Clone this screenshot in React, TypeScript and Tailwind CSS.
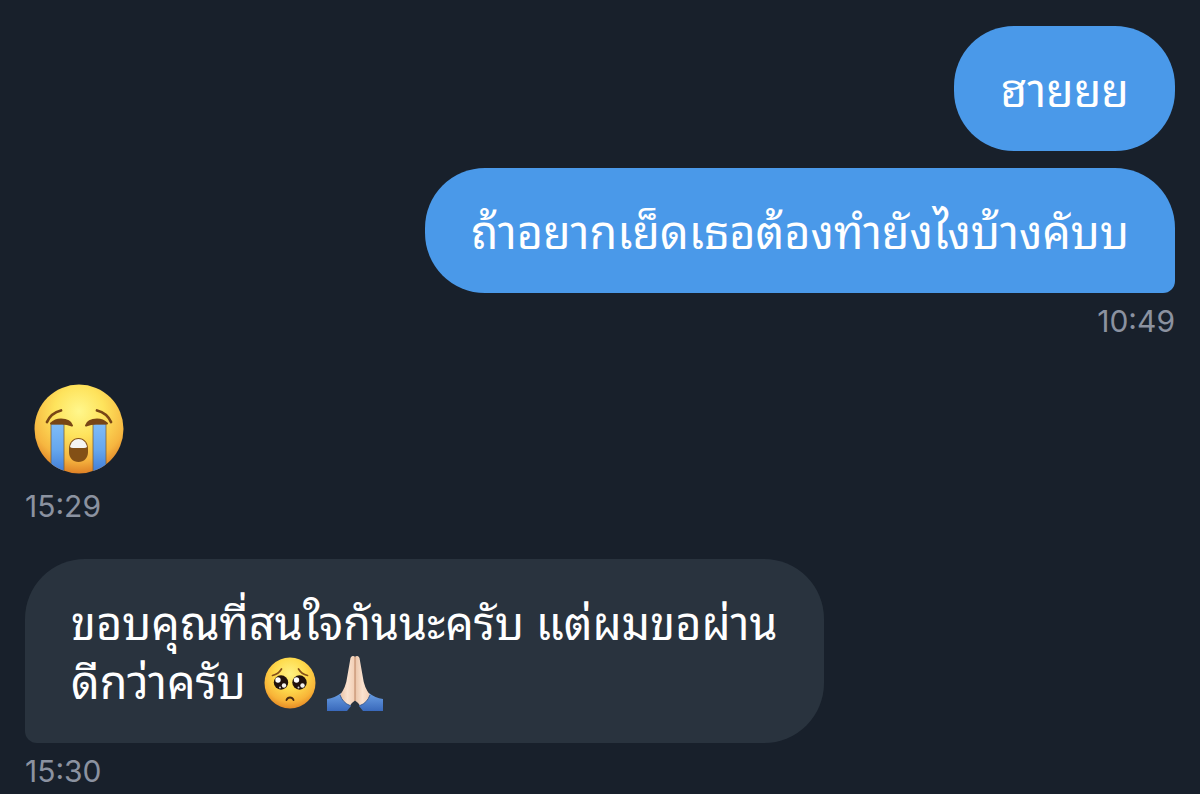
import type { ReactNode } from "react"
import clsx from "clsx"

function CryingFace({ className }: { className?: string }) {
  return (
    <svg viewBox="0 0 90 90" className={className} role="img" aria-label="Loudly crying face">
      <defs>
        <radialGradient id="cry-skin" cx="0.5" cy="0.3" r="0.7">
          <stop offset="0" stopColor="#fff78c" />
          <stop offset="0.4" stopColor="#fee35c" />
          <stop offset="0.78" stopColor="#f6b640" />
          <stop offset="1" stopColor="#df8126" />
        </radialGradient>
        <linearGradient id="cry-tear" x1="0" y1="0" x2="0" y2="1">
          <stop offset="0" stopColor="#7fbcf8" />
          <stop offset="0.5" stopColor="#66a7ee" />
          <stop offset="1" stopColor="#3c77d2" />
        </linearGradient>
        <clipPath id="cry-clip">
          <circle cx="45" cy="45" r="44.5" />
        </clipPath>
      </defs>
      <circle cx="45" cy="45" r="44.5" fill="url(#cry-skin)" />
      <g clipPath="url(#cry-clip)">
        <path d="M17 40h13v51H17z" fill="url(#cry-tear)" stroke="#78623f" strokeWidth="0.8" />
        <path d="M59 40h13v51H59z" fill="url(#cry-tear)" stroke="#78623f" strokeWidth="0.8" />
      </g>
      <path d="M13 38q4-9 14-11.5" fill="none" stroke="#784616" strokeWidth="2.8" strokeLinecap="round" />
      <path d="M77 38q-4-9-14-11.5" fill="none" stroke="#784616" strokeWidth="2.8" strokeLinecap="round" />
      <path d="M17 39.5q4-4 10-4 9 0 11 6-5-2-10-2-6 0-11 0z" fill="#784616" stroke="#784616" strokeWidth="2" strokeLinejoin="round" />
      <path d="M73 39.5q-4-4-10-4-9 0-11 6 5-2 10-2 6 0 11 0z" fill="#784616" stroke="#784616" strokeWidth="2" strokeLinejoin="round" />
      <path d="M35 65c0-7 4-11 9.5-11S54 58 54 65v3c0 6-4 10-9.5 10S35 74 35 68z" fill="#835016" />
      <path d="M36 63c1-5 4-8 8.5-8s7.5 3 8.5 8q-1 1-3 1H39q-2 0-3-1z" fill="#f5f5f2" />
    </svg>
  )
}

function PleadingFace({ className }: { className?: string }) {
  return (
    <svg viewBox="0 0 52 52" className={className} role="img" aria-label="Pleading face">
      <defs>
        <radialGradient id="plead-skin" cx="0.5" cy="0.32" r="0.68">
          <stop offset="0" stopColor="#fff184" />
          <stop offset="0.45" stopColor="#fedb4d" />
          <stop offset="0.8" stopColor="#f8b438" />
          <stop offset="1" stopColor="#e58b26" />
        </radialGradient>
      </defs>
      <circle cx="26" cy="26" r="25.5" fill="url(#plead-skin)" />
      <path d="M8.5 18.5q6-1.5 9-6.5M43.5 18.5q-6-1.5-9-6.5" fill="none" stroke="#855019" strokeWidth="1.7" strokeLinecap="round" />
      <circle cx="17" cy="25.5" r="7.2" fill="#21120d" />
      <circle cx="35.5" cy="25.5" r="7.2" fill="#21120d" />
      <circle cx="14" cy="23" r="2.7" fill="#fff" />
      <circle cx="32.5" cy="23" r="2.7" fill="#fff" />
      <circle cx="20" cy="28.5" r="2.2" fill="#f4f2ef" />
      <circle cx="38.5" cy="28.5" r="2.2" fill="#f4f2ef" />
      <circle cx="16" cy="30.5" r="1" fill="#d4d2cf" />
      <circle cx="34.5" cy="30.5" r="1" fill="#d4d2cf" />
      <path d="M22.5 43q1-2.5 3.5-2.5t3.5 2.5" fill="none" stroke="#4a2a10" strokeWidth="1.9" strokeLinecap="round" />
    </svg>
  )
}

function FoldedHands({ className }: { className?: string }) {
  return (
    <svg viewBox="0 0 58 56" className={className} role="img" aria-label="Folded hands">
      <defs>
        <linearGradient id="hand" x1="0" y1="0" x2="1" y2="0">
          <stop offset="0" stopColor="#e9c3a7" />
          <stop offset="0.5" stopColor="#fae2cf" />
          <stop offset="1" stopColor="#f1ceb4" />
        </linearGradient>
        <linearGradient id="sleeve" x1="0" y1="0" x2="0" y2="1">
          <stop offset="0" stopColor="#6a9fe4" />
          <stop offset="1" stopColor="#3969bb" />
        </linearGradient>
      </defs>
      <path d="M1 44q8-1 14-6l10 13-4 5H1z" fill="url(#sleeve)" />
      <path d="M57 44q-8-1-14-6L33 51l4 5h20z" fill="url(#sleeve)" />
      <path d="M29 2q-1-1.5-2.5-1T24.5 3L21 23q-1 9-7 17 3 8 10 10.500 2-3 5-5z" fill="url(#hand)" />
      <path d="M29 2q1-1.5 2.5-1T33.5 3L37 23q1 9 7 17-3 8-10 10.500-2-3-5-5z" fill="url(#hand)" />
      <path d="M29 2v44" stroke="#bc8565" strokeWidth="1" />
      <path d="M14 40q3 8 10 10.500M44 40q-3 8-10 10.500" fill="none" stroke="#325791" strokeWidth="0.9" />
    </svg>
  )
}

function Bubble({ sent = false, last = false, children }: { sent?: boolean; last?: boolean; children: ReactNode }) {
  return (
    <p
      className={clsx(
        "w-fit max-w-[800px] rounded-[60px] px-[46px] pt-8 pb-[34px] text-[45px] leading-[59px] text-white",
        sent ? "bg-[#4a99e9]" : "bg-[#29333e]",
        last && (sent ? "rounded-br-[12px]" : "rounded-bl-[12px]"),
      )}
    >
      {children}
    </p>
  )
}

function Timestamp({ time }: { time: string }) {
  return (
    <time dateTime={time} className="block pt-2 font-['Inter',sans-serif] text-[30px] leading-10 text-[#8b92a0]">
      {time}
    </time>
  )
}

export default function App() {
  return (
    <main
      lang="th"
      className="flex min-h-screen flex-col bg-[#18202b] px-[25px] pt-[26px] font-['Thonburi','Noto_Sans_Thai_Looped','Loma','Waree','Garuda','Liberation_Sans',sans-serif]"
    >
      <section className="flex flex-col items-end">
        <div className="flex flex-col items-end gap-[17px]">
          <Bubble sent>ฮายยย</Bubble>
          <Bubble sent last>
            ถ้าอยากเย็ดเธอต้องทำยังไงบ้างคับบ
          </Bubble>
        </div>
        <Timestamp time="10:49" />
      </section>

      <section className="mt-[43px]">
        <CryingFace className="mb-1 ml-[9px] size-[90px]" />
        <Timestamp time="15:29" />
      </section>

      <section className="mt-[33px]">
        <Bubble last>
          ขอบคุณที่สนใจกันนะครับ แต่ผมขอผ่าน
          <br />
          ดีกว่าครับ{" "}
          <span className="ml-1.5 inline-flex h-8 items-center gap-2.5 pb-2 align-middle">
            <PleadingFace className="size-[52px] shrink-0" />
            <FoldedHands className="h-[56px] w-[58px] shrink-0" />
          </span>
        </Bubble>
        <Timestamp time="15:30" />
      </section>
    </main>
  )
}
